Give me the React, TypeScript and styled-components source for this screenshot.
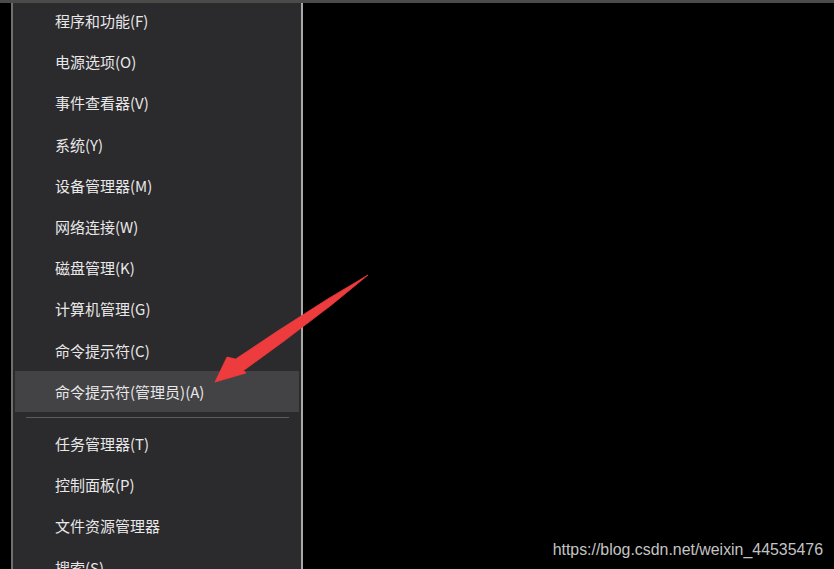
import React from 'react';
import styled, { createGlobalStyle } from 'styled-components';

const GlobalStyle = createGlobalStyle`
  html, body {
    margin: 0;
    padding: 0;
    background: #000;
  }
`;

interface MenuItem {
  label: string;
  active?: boolean;
}

const Screen = styled.div`
  position: relative;
  width: 834px;
  height: 569px;
  overflow: hidden;
  background: #000;
  display: flex;
  font-family: 'Noto Sans CJK SC', 'Noto Sans', sans-serif;
`;

const FrameEdge = styled.div`
  position: absolute;
  top: 0;
  left: 0;
  right: 0;
  height: 3px;
  background: #4b4b49;
`;

const Panel = styled.div`
  box-sizing: border-box;
  margin-left: 11px;
  width: 292px;
  height: 100%;
  background: #2b2a2d;
  border-left: 2px solid #6f6f6f;
  border-right: 2px solid #a9a9a9;
  padding: 0 2px;
  display: flex;
  flex-direction: column;
`;

const Row = styled.div<{ $active?: boolean }>`
  flex: none;
  height: 41.2px;
  display: flex;
  align-items: center;
  padding-left: 40px;
  background: ${({ $active }) => ($active ? '#434245' : 'transparent')};
  color: #e8e8e8;
  font-size: 15px;
  white-space: nowrap;
`;

const Divider = styled.div`
  flex: none;
  height: 1px;
  margin: 5.5px 10px 4.5px 11px;
  background: #5c5c5c;
`;

const Watermark = styled.div`
  position: absolute;
  right: 11px;
  bottom: 10px;
  color: #c4c4c4;
  font-family: 'Liberation Sans', Arial, sans-serif;
  font-size: 15.9px;
`;

const Pointer = styled.svg`
  position: absolute;
  left: 0;
  top: 0;
  pointer-events: none;
`;

const topItems: MenuItem[] = [
  { label: '程序和功能(F)' },
  { label: '电源选项(O)' },
  { label: '事件查看器(V)' },
  { label: '系统(Y)' },
  { label: '设备管理器(M)' },
  { label: '网络连接(W)' },
  { label: '磁盘管理(K)' },
  { label: '计算机管理(G)' },
  { label: '命令提示符(C)' },
  { label: '命令提示符(管理员)(A)', active: true },
];

const bottomItems: MenuItem[] = [
  { label: '任务管理器(T)' },
  { label: '控制面板(P)' },
  { label: '文件资源管理器' },
  { label: '搜索(S)' },
];

export default function App() {
  return (
    <>
      <GlobalStyle />
      <Screen>
        <Panel>
          {topItems.map((item) => (
            <Row key={item.label} $active={item.active}>
              {item.label}
            </Row>
          ))}
          <Divider />
          {bottomItems.map((item) => (
            <Row key={item.label}>{item.label}</Row>
          ))}
        </Panel>
        <FrameEdge />
        <Pointer width="834" height="569" viewBox="0 0 834 569">
          <polygon
            points="215,382 227,357 235.6,359.1 277.2,331.3 327.8,298.9 368,275 331.8,304.7 284,341.1 243.6,370.5 246,373"
            fill="#ee3b3d"
            stroke="#ee3b3d"
            strokeWidth="0.8"
            strokeLinejoin="round"
          />
        </Pointer>
        <Watermark>https://blog.csdn.net/weixin_44535476</Watermark>
      </Screen>
    </>
  );
}
